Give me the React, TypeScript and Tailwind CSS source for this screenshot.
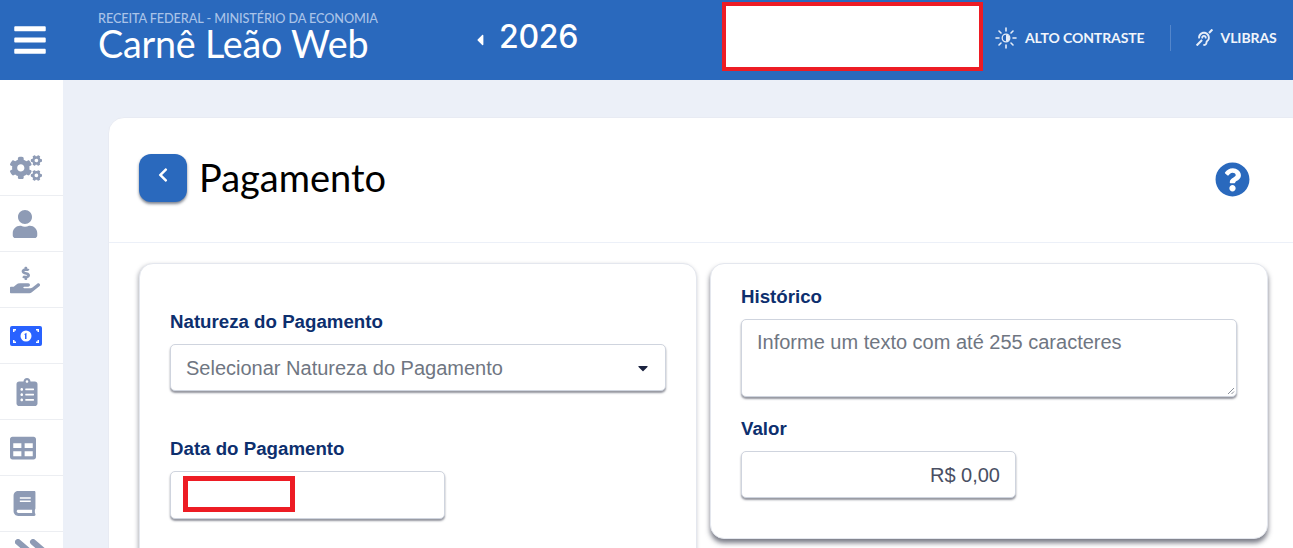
import React from "react";
import { FaBars, FaCogs, FaUser, FaHandHoldingUsd, FaClipboardList, FaTable, FaBook, FaQuestionCircle, FaChevronLeft, FaCaretLeft, FaCaretDown, FaDeaf } from "react-icons/fa";

const Bill = () => (
  <svg width="32" height="20" viewBox="0 0 32 20">
    <rect width="32" height="20" fill="#2962ff" rx="2" />
    <circle cx="16" cy="10" r="5.500" fill="#fff" />
    <path d="M14.500 8l2-1.200V13h-1.500V8.800l-.5.300z" fill="#2962ff" />
    <path d="M3 3h3v1.500H4.500V6H3zM29 3h-3v1.500h1.500V6H29zM3 17h3v-1.500H4.500V14H3zM29 17h-3v-1.500h1.500V14H29z" fill="#fff" />
  </svg>
);

const Contrast = () => (
  <svg width="22" height="22" viewBox="0 0 22 22" fill="none" stroke="#e6edf8" strokeWidth="1.600" strokeLinecap="round">
    <path d="M11 1v3M11 18v3M1 11h3M18 11h3M4 4l2 2M16 16l2 2M4 18l2-2M16 6l2-2" />
    <circle cx="11" cy="11" r="3.800" strokeWidth="1.300" />
    <path d="M11 7.500a3.500 3.500 0 0 1 0 7z" fill="#e6edf8" stroke="none" />
  </svg>
);

const Slashes = () => (
  <svg width="36" height="18" viewBox="0 0 36 18" fill="none" stroke="#8e9bb5" strokeWidth="6" strokeLinecap="round">
    <path d="M3 3l14 12M18 3l14 12" />
  </svg>
);

function Row({ children, pad, last }: { children: React.ReactNode; pad: string; last?: boolean }) {
  return (
    <div className={`h-[56px] shrink-0 flex items-center text-[#8e9bb5] ${pad} ${last ? "" : "border-b border-[#eceef2]"}`}>
      {children}
    </div>
  );
}

const label = "block text-[18.700px] leading-[24px] font-bold text-[#0d2f6e]";
const field = "bg-white rounded-[5px] border border-[#cfd4de] shadow-[0_2px_2px_rgba(60,64,80,0.55)]";

export default function App() {
  return (
    <div className="h-[548px] w-[1293px] overflow-hidden flex flex-col bg-[#ecf0f8] font-['Liberation_Sans',sans-serif]">
      <header className="h-[80px] shrink-0 bg-[#2a69bd] flex items-center text-white">
        <div className="w-[98px] shrink-0 pl-[12px]">
          <FaBars size={36} />
        </div>
        <div className="w-[375px] shrink-0 font-['Lato',sans-serif] -mt-[6px]">
          <div className="text-[12.700px] leading-[14px] text-[#a9c3e8] font-medium tracking-[-0.1px] whitespace-nowrap">RECEITA FEDERAL - MINISTÉRIO DA ECONOMIA</div>
          <div className="text-[37.700px] leading-[38px] tracking-[-0.2px] whitespace-nowrap">Carnê Leão Web</div>
        </div>
        <div className="w-[250px] shrink-0 flex items-center -mt-[6px] font-['Inter',sans-serif]">
          <FaCaretLeft size={18} className="mt-[6px] -ml-[2px]" />
          <span className="ml-[10px] text-[32px] font-medium leading-none tracking-[-0.3px]">2026</span>
        </div>
        <div className="w-[261px] h-[69px] shrink-0 -ml-[1px] bg-white border-[4px] border-[#ed1c24] -mt-[7px]" />
        <div className="flex items-center -mt-[5px] ml-[12px] text-[14px] font-bold font-['Lato',sans-serif] text-[#f1f5fb] tracking-[-0.100px]">
          <Contrast />
          <span className="ml-[8px]">ALTO CONTRASTE</span>
          <div className="w-px h-[26px] bg-[#5486cb] ml-[25px] mr-[25px]" />
          <FaDeaf size={17} className="text-[#e6edf8]" />
          <span className="ml-[8px]">VLIBRAS</span>
        </div>
      </header>
      <div className="flex flex-1 min-h-0">
        <aside className="w-[63px] shrink-0 bg-white pt-[60px] flex flex-col">
          <Row pad="pl-[10px]"><FaCogs size={32} /></Row>
          <Row pad="pl-[11px]"><FaUser size={28} /></Row>
          <Row pad="pl-[10px]"><FaHandHoldingUsd size={30} /></Row>
          <Row pad="pl-[10px]"><Bill /></Row>
          <Row pad="pl-[13px]"><FaClipboardList size={28} /></Row>
          <Row pad="pl-[10px]"><FaTable size={26} /></Row>
          <Row pad="pl-[12px]"><FaBook size={25} /></Row>
          <Row pad="pl-[15px] !items-start pt-[7px]" last><Slashes /></Row>
        </aside>
        <main className="flex-1 min-w-0 pl-[45px] pt-[37px]">
          <section className="w-[1200px] bg-white rounded-tl-[16px] rounded-tr-[16px] border border-[#e8ebf3] h-[520px]">
            <div className="h-[125px] border-b border-[#ecf0f8] pl-[30px] pt-[36px] flex items-start w-[1184px]">
              <button className="w-[48px] h-[48px] rounded-[12px] bg-[#2a69bd] text-white flex justify-center pt-[13px] shadow-[0_2px_3px_rgba(40,50,70,0.6)]">
                <FaChevronLeft size={16} />
              </button>
              <h1 className="ml-[12px] mt-[1px] text-[38px] leading-[44px] font-['Lato',sans-serif] text-black">Pagamento</h1>
              <FaQuestionCircle size={35} className="text-[#2a69bd] ml-auto mr-[43px] mt-[8px]" />
            </div>
            <div className="flex items-start gap-[13px] pl-[30px] pt-[20px]">
              <div className="w-[558px] h-[400px] shrink-0 bg-white rounded-[14px] border border-[#e4e7ee] shadow-[-1px_2px_4px_rgba(60,64,80,0.4)] pt-[46px] pl-[30px] pr-[30px]">
                <label className={label}>Natureza do Pagamento</label>
                <div className={`${field} h-[47px] mt-[10px] flex items-center justify-between pl-[15px] pr-[14px] text-[20px] text-[#6f7682]`}>
                  <span>Selecionar Natureza do Pagamento</span>
                  <FaCaretDown size={16} className="text-[#1c2340]" />
                </div>
                <label className={`${label} mt-[46px]`}>Data do Pagamento</label>
                <div className={`${field} w-[275px] h-[48px] mt-[10px] pl-[12px] pt-[4px]`}>
                  <div className="w-[112px] h-[36px] bg-white border-[5px] border-[#ed1c24]" />
                </div>
              </div>
              <div className="w-[558px] h-[276px] shrink-0 bg-white rounded-[14px] border border-[#e4e7ee] shadow-[0_4px_5px_rgba(50,54,70,0.65)] pt-[21px] pl-[30px] pr-[30px]">
                <label className={label}>Histórico</label>
                <div className={`${field} relative h-[78px] mt-[10px] pl-[15px] pt-[9px] text-[20px] leading-[27px] text-[#6f7682]`}>
                  <span>Informe um texto com até 255 caracteres</span>
                  <svg className="absolute right-[1px] bottom-[1px]" width="8" height="8" viewBox="0 0 8 8" stroke="#6b7280" strokeWidth="0.800">
                    <path d="M1 7l6-6M4.500 7l2.500-2.500" />
                  </svg>
                </div>
                <label className={`${label} mt-[20px]`}>Valor</label>
                <div className={`${field} w-[275px] h-[47px] mt-[10px] flex items-center justify-end pr-[15px] text-[20px] text-[#4a4f63]`}>
                  R$ 0,00
                </div>
              </div>
            </div>
          </section>
        </main>
      </div>
    </div>
  );
}
